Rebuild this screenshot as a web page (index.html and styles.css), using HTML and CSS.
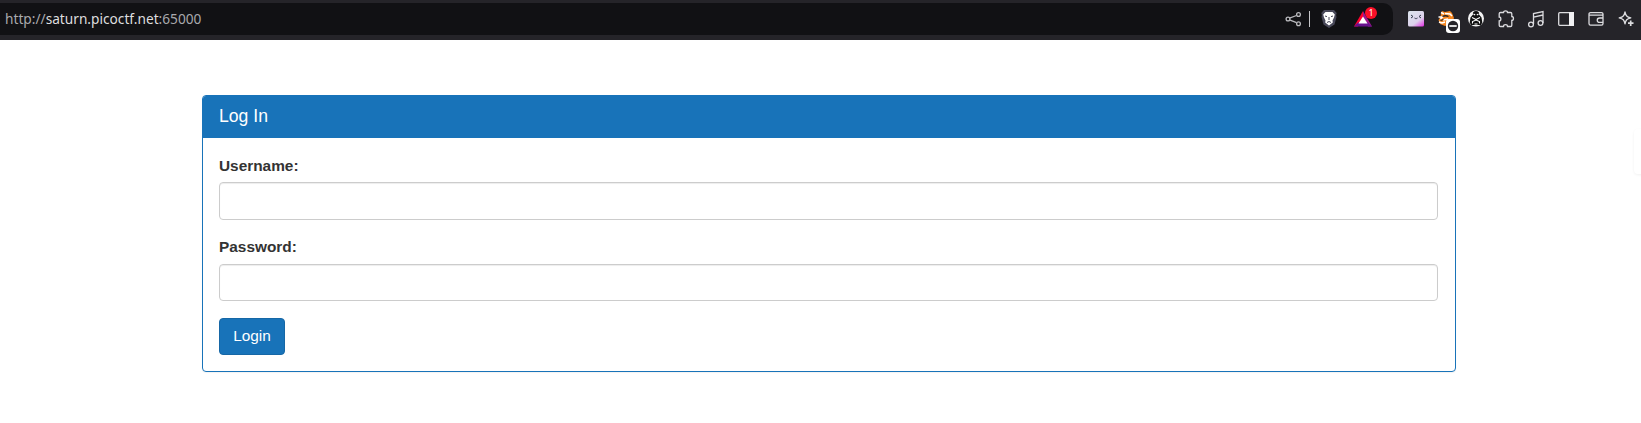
FILE: index.html
```html
<!DOCTYPE html>
<html lang="en">
<head>
<meta charset="utf-8">
<title>Log In</title>
<link rel="stylesheet" href="styles.css">
</head>
<body>
<header class="toolbar">
  <div class="address">
    <div class="url">http://<b>saturn.picoctf.net</b>:65000</div>
    <svg class="icon" viewBox="0 0 30 32" fill="none" stroke="#b9b9bd" stroke-width="1.3"><path d="M10.500 15.200 17.500 12.500M10.500 16.800 17.500 19.700"/><circle cx="9" cy="16" r="1.900"/><circle cx="19.500" cy="11.500" r="1.900"/><circle cx="19.500" cy="20.700" r="1.900"/></svg>
    <span class="divider"></span>
    <svg class="icon shield" viewBox="0 0 30 32"><path d="M10 7h10l2.700 3-.6 2 .4 2-2 7.500L15 25l-5.500-3.500-2-7.500.4-2-.6-2z" fill="#484859"/><path d="M11.500 9h7l2.300 2.500-.8 3-1.500 3 .3 2L15 22.500 11.200 19.500l.3-2-1.500-3-.8-3z" fill="#fff"/><path d="m11 13 2 .6M19 13l-2 .6M15 14v3M13 19.500l2-1 2 1" fill="none" stroke="#484859"/></svg>
    <div class="rewards">
      <svg class="icon" viewBox="0 0 30 32"><path d="M15 8 6 23.500h4L15 15z" fill="#ff002e"/><path d="m15 8 9 15.500h-4L15 15z" fill="#a0148c"/><path d="m6 23.500 4-4h10l4 4z" fill="#68108d"/><path d="m15 13.500-4.500 7h9z" fill="#fff"/></svg>
      <span class="badge">1</span>
    </div>
  </div>
  <div class="extensions">
    <svg class="icon" viewBox="0 0 30 32"><defs><linearGradient id="g" x1=".2" y1="0" x2="1" y2="1"><stop stop-color="#dce2ec"/><stop offset=".6" stop-color="#ddd2ec"/><stop offset="1" stop-color="#e52be5"/></linearGradient></defs><rect x="7" y="8" width="16" height="15.500" rx="1.500" fill="url(#g)"/><path d="m10 12 2 1.500-2 1.500M20 12l-2 1.500 2 1.500M13.500 15l.8.6.7-.6.700.6.8-.6" fill="none" stroke="#343b4e"/></svg>
    <svg class="icon" viewBox="0 0 30 32"><path d="m10 10 1-2 3 1 5-1 2 2 2 5-3 6-6 2-5-2-1.500-4 2-3z" fill="#f5861f"/><path d="M7.500 14h4l-2 2M10 9.500l3 1.500M14 10.500l5 .5 2 2M8 19l3 1 3-1M12 17l5-1" fill="none" stroke="#fff" stroke-width="1.600"/><path d="M11.500 13.500q3-1.500 6 0M9.500 17.500l3-1" fill="none" stroke="#2b211e" stroke-width="1.300"/><rect x="15" y="16" width="14" height="14" rx="3" fill="#fff"/><circle cx="22" cy="23" r="5.200" fill="#252429"/><path d="M18.300 23h7.400" stroke="#fff" stroke-width="1.700"/></svg>
    <svg class="icon" viewBox="0 0 30 32"><circle cx="15" cy="15.500" r="8" fill="#f3f3f3"/><path d="M15 8c2.400 0 3.500 1.500 3 3.500l2.500 3 .8 5-1.300 2.500h-10l-1.300-2.500.8-5 2.500-3C11.500 9.500 12.600 8 15 8z" fill="#111"/><path d="m12.500 11 1.700 1M17.500 11l-1.700 1M11 14.500l4 2 4-2M11.500 20.500v-2l3.500-1.500 3.500 1.500v2M13.500 21h3" stroke="#fff" fill="none" stroke-width="1.100"/></svg>
    <svg class="icon line" viewBox="0 0 30 32"><path d="M9.500 9.500h3c0-2.200 4-2.200 4 0h3c1 0 1.300.4 1.300 1.300v2.700c2.200 0 2.200 4 0 4v4.700c0 .9-.4 1.300-1.300 1.300h-3c0-2.400-4-2.400-4 0h-3c-.9 0-1.300-.4-1.300-1.300V18c2.200 0 2.200-4 0-4v-3.200c0-.9.300-1.300 1.300-1.300z"/></svg>
    <svg class="icon line" viewBox="0 0 30 32"><path d="M12.500 21V10.500L22 8.500v11.500M12.500 14.200 22 12"/><circle cx="10" cy="21.500" r="2.400"/><circle cx="19.500" cy="20" r="2.400"/></svg>
    <svg class="icon line" viewBox="0 0 30 32"><rect x="7.700" y="9.700" width="14.600" height="12.600" rx="1"/><path d="M18 9h5v14h-5z" fill="#f0f0f2" stroke="none"/></svg>
    <svg class="icon line" viewBox="0 0 30 32"><path d="M22 12.500V11c0-1-.5-1.300-1.500-1.300h-11C8.500 9.700 8 10 8 11v9.500c0 1 .5 1.700 1.500 1.700h11c1 0 1.500-.7 1.500-1.700v-7.500c0-.5-.4-.8-1-.8H8.500M22.500 15h-4c-3 0-3 4.300 0 4.300h4"/></svg>
    <svg class="icon line" viewBox="0 0 30 32"><path d="M14 8.800c.8 4 1.800 5 5.800 6-4 1-5 2-5.800 6-.8-4-1.800-5-5.800-6 4-1 5-2 5.800-6z" stroke-linejoin="round"/><path d="M19.700 17.500v5.500M17 20.200h5.500" stroke-width="1.700"/></svg>
  </div>
</header>
<main>
  <section class="panel">
    <h3 class="panel-heading">Log In</h3>
    <form class="panel-body">
      <label for="username">Username:</label>
      <input id="username" class="field" type="text">
      <label for="password">Password:</label>
      <input id="password" class="field second" type="password">
      <button class="login" type="button">Login</button>
    </form>
  </section>
  <aside class="edge-popup"></aside>
</main>
</body>
</html>
```
FILE: styles.css
```css
* { box-sizing: border-box; }
body { margin: 0; height: 423px; overflow: hidden; background: #fff; color: #333; font-family: "Liberation Sans", Arial, sans-serif; font-size: 15.4px; line-height: 22px; }
.toolbar { display: flex; height: 40px; padding-top: 3px; background: #252429; }
.address { display: flex; width: 1393px; height: 32px; padding-right: 15px; background: #111114; border-radius: 0 10px 10px 0; }
.url { flex: 1; padding: 0 0 0 5px; font: 13.7px/32px "Noto Sans", sans-serif; color: #a9a9ad; }
.url b { font-weight: 400; color: #dededf; }
.icon { display: block; flex: none; width: 30px; height: 32px; }
.line { fill: none; stroke: #dcdcdf; stroke-width: 1.3; }
.divider { width: 1px; height: 16px; margin: 8px 4px 0 0; background: #c5c5c9; }
.rewards { position: relative; margin-left: 4px; }
.badge { position: absolute; left: 17px; top: 4px; width: 12px; height: 12px; border-radius: 6px; background: #fa1028; color: #fff; font: 9px/12px "Noto Sans", sans-serif; text-align: center; }
.extensions { display: flex; margin-left: 8px; }
.panel { width: 1254px; height: 277px; margin: 55px 0 0 202px; border: 1px solid #1873b9; border-radius: 4px; box-shadow: 0 1px 1px rgba(0,0,0,.05); overflow: hidden; }
.panel-heading { height: 42px; margin: 0; padding: 10px 16px; background: #1873b9; color: #fff; font-size: 17.6px; font-weight: 400; line-height: 20px; }
.panel-body { display: flex; flex-direction: column; align-items: flex-start; padding: 17px 17px 0 16px; }
label { height: 22px; margin-bottom: 5px; font-weight: 700; }
.field { width: 100%; height: 38px; margin: 0 0 16px; border: 1px solid #ccc; border-radius: 4px; background: #fff; box-shadow: inset 0 1px 1px rgba(0,0,0,.075); outline: 0; }
.second { height: 37px; margin: 1px 0 17px; }
.login { width: 66px; height: 37px; padding: 0 0 2px; border: 1px solid #1667a6; border-radius: 4px; background: #1873b9; color: #fff; font: 15.4px/33px "Liberation Sans", Arial, sans-serif; }
.edge-popup { position: absolute; right: -6px; top: 129px; width: 13px; height: 45px; border-radius: 4px; background: #fff; box-shadow: 0 1px 3px rgba(0,0,0,.06); }
```
